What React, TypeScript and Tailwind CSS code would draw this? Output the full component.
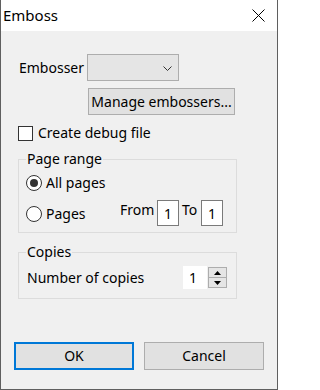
import React from 'react'

/**
 * Emboss dialog: Windows-style modal with embosser picker, page range and copies
 */

function Chevron() {
  return (
    <svg className="h-[5px] w-[9px]" viewBox="0 0 9 5" fill="none" stroke="#333" strokeWidth={1}>
      <path d="M0.5 0.5L4.5 4.5L8.5 0.5" />
    </svg>
  )
}

function Radio({ checked }: { checked?: boolean }) {
  return (
    <span className="flex h-[16px] w-[16px] shrink-0 items-center justify-center rounded-full border border-[#333] bg-white">
      {checked && <span className="h-[8px] w-[8px] rounded-full bg-[#333]" />}
    </span>
  )
}

function GroupBox({ title, className = '', children }: { title: string; className?: string; children: React.ReactNode }) {
  return (
    <fieldset className={`ml-[17px] w-[219px] border border-[#dcdcdc] ${className}`}>
      <legend className="ml-[7px] px-[1px] leading-[16px]">{title}</legend>
      {children}
    </fieldset>
  )
}

export default function App() {
  return (
    <div className="flex h-[390px] w-[278px] flex-col whitespace-nowrap border-x border-b border-[#5f5f5f] bg-[#f0f0f0] font-['Noto_Sans',sans-serif] text-[14px] leading-[20px] text-black">
      {/* Title bar */}
      <div className="flex h-[31px] shrink-0 items-center justify-between bg-white pl-[2px] pr-[12px]">
        <span className="-mt-[2px] text-[15px]">Emboss</span>
        <svg className="h-[13px] w-[13px]" viewBox="0 0 13 13" stroke="#000" strokeWidth={1}>
          <path d="M0.5 0.5L12.5 12.5M12.5 0.5L0.5 12.5" />
        </svg>
      </div>

      {/* Embosser selector */}
      <div className="mt-[23px] flex items-center">
        <span className="ml-[18px] w-[68px]">Embosser</span>
        <div className="flex h-[27px] w-[92px] items-center justify-end border border-[#adadad] bg-[#e5e5e5] pr-[6px] pt-[2px]">
          <Chevron />
        </div>
      </div>

      <button className="ml-[87px] mt-[7px] h-[27px] w-[147px] border border-[#adadad] bg-[#e1e1e1] text-center">
        Manage embossers...
      </button>

      {/* Debug checkbox */}
      <label className="ml-[17px] mt-[8px] flex items-center">
        <span className="h-[15px] w-[15px] border border-[#333] bg-white" />
        <span className="ml-[5px]">Create debug file</span>
      </label>

      {/* Page range */}
      <GroupBox title="Page range" className="mt-[8px] h-[82px]">
        <div className="ml-[7px] mt-[6px] flex items-center">
          <Radio checked />
          <span className="ml-[4px]">All pages</span>
        </div>
        <div className="ml-[7px] mt-[9px] flex items-center">
          <Radio />
          <span className="ml-[4px] w-[74px]">Pages</span>
          <span className="-mt-[8px] w-[37px]">From</span>
          <span className="-mt-[2px] flex h-[26px] w-[22px] items-center justify-center border border-[#7a7a7a] bg-white pt-[2px]">1</span>
          <span className="-mt-[8px] ml-[3px] w-[19px]">To</span>
          <span className="-mt-[2px] flex h-[26px] w-[22px] items-center justify-center border border-[#7a7a7a] bg-white pt-[2px]">1</span>
        </div>
      </GroupBox>

      {/* Copies */}
      <GroupBox title="Copies" className="mt-[11px] h-[55px]">
        <div className="mt-[6px] flex items-center">
          <span className="ml-[8px] w-[156px]">Number of copies</span>
          <span className="flex h-[23px] w-[24px] items-center bg-white pl-[6px]">1</span>
          <div className="ml-[1px] flex h-[21px] w-[19px] flex-col border border-[#adadad] bg-[#e5e5e5]">
            <div className="flex flex-1 items-center justify-center border-b border-[#adadad]">
              <svg className="h-[4px] w-[7px]" viewBox="0 0 7 4"><path d="M3.5 0L7 4H0z" fill="#000" /></svg>
            </div>
            <div className="flex flex-1 items-center justify-center">
              <svg className="h-[4px] w-[7px]" viewBox="0 0 7 4"><path d="M0 0H7L3.5 4z" fill="#000" /></svg>
            </div>
          </div>
        </div>
      </GroupBox>

      {/* Actions */}
      <div className="mt-[43px] flex gap-[10px] pl-[13px]">
        <button className="h-[28px] w-[120px] border-2 border-[#0078d7] bg-[#e1e1e1]">OK</button>
        <button className="h-[28px] w-[120px] border border-[#adadad] bg-[#e1e1e1]">Cancel</button>
      </div>
    </div>
  )
}
